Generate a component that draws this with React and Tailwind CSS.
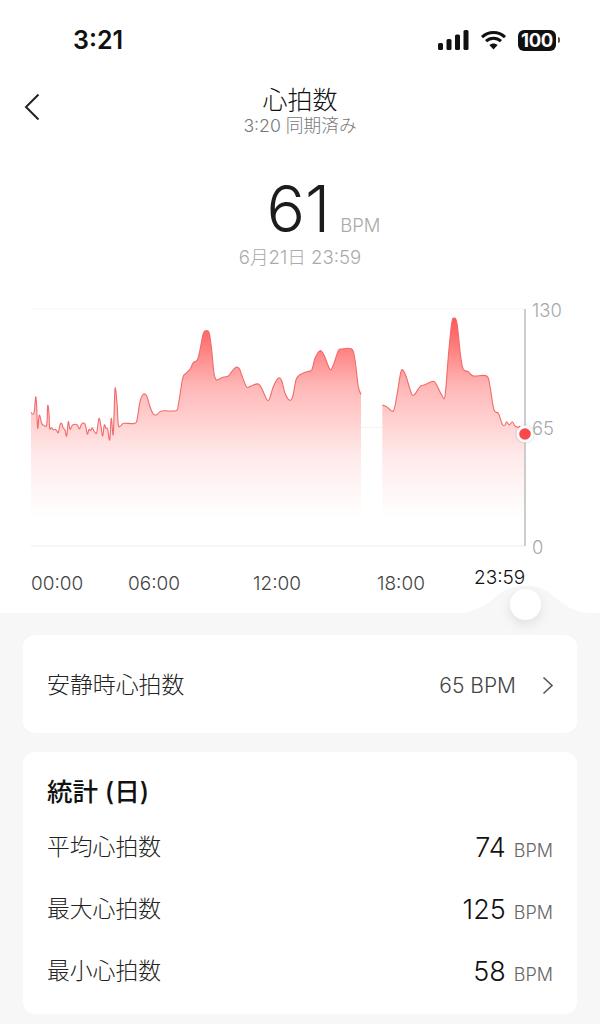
const z1 = [[93,367],[98,373],[103,365],[107,320],[110,350],[113,415],[118,375],[125,400],[130,405],[140,405],[143,347],[147,370],[149,415],[155,413],[160,420],[165,418],[170,422],[175,428],[180,405],[185,400],[190,415],[195,420],[200,438],[205,395],[210,418],[218,405],[232,405],[238,417],[245,402],[255,402],[262,432],[267,418],[272,422],[277,413],[283,425],[290,428],[297,385],[303,410],[308,438],[313,405],[318,415],[323,418],[329,450],[334,385],[340,433],[345,297],[351,340],[355,405],[362,407],[372,400],[405,400],[412,385],[420,335],[430,313],[440,318],[450,350],[460,372],[470,374],[485,363],[528,362],[535,345],[548,265],[558,250],[570,238],[580,218],[592,210],[600,180],[610,130],[620,122],[628,130],[635,180],[642,250],[650,270],[665,263],[685,258],[695,245],[708,232],[718,236],[725,255],[738,288],[745,292],[760,285],[775,282],[785,295],[800,328],[808,328],[820,290],[835,265],[845,272],[855,310],[868,330],[878,320],[888,270],[900,254]];
const z2a = [[20,245],[35,240],[45,205],[60,182],[72,195],[90,238],[100,225],[115,182],[125,177],[155,177],[165,210],[175,290],[183,313]];
const z2b = [[247,345],[260,350],[280,363],[290,320],[302,248],[310,241],[320,265],[335,312],[345,312],[360,290],[375,284],[400,274],[410,285],[425,315],[435,318],[445,200],[455,100],[463,84],[471,100],[482,200],[490,238],[505,245],[520,258],[560,258],[570,290],[582,360],[595,370],[607,403],[615,405],[620,395],[628,405],[637,395],[645,408],[655,412],[660,408]];
const toA = (p, ox) => p.map(([x, y]) => [ox + x / 3, 290 + y / 3]);
const seg1 = [...toA(z1, 0), ...toA(z2a, 300)];
const seg2 = toA(z2b, 300);
const smooth = (pts) => {
  let d = `M${pts[0][0].toFixed(1)} ${pts[0][1].toFixed(1)}`;
  for (let i = 0; i < pts.length - 1; i++) {
    const a = pts[Math.max(i - 1, 0)], b = pts[i], c = pts[i + 1], e = pts[Math.min(i + 2, pts.length - 1)];
    const t = 6;
    d += `C${(b[0] + (c[0] - a[0]) / t).toFixed(1)} ${(b[1] + (c[1] - a[1]) / t).toFixed(1)} ${(c[0] - (e[0] - b[0]) / t).toFixed(1)} ${(c[1] - (e[1] - b[1]) / t).toFixed(1)} ${c[0].toFixed(1)} ${c[1].toFixed(1)}`;
  }
  return d;
};
const area = (pts) => `${smooth(pts)}L${pts[pts.length - 1][0].toFixed(1)} 516L${pts[0][0].toFixed(1)} 516Z`;

const Chart = () => (
  <svg width="528" height="261" viewBox="0 297 528 261" className="block shrink-0 overflow-visible">
    <defs>
      <linearGradient id="hr" gradientUnits="userSpaceOnUse" x1="0" y1="318" x2="0" y2="516">
        <stop offset="0" stopColor="#ff5656" />
        <stop offset="0.35" stopColor="#ffb8b8" />
        <stop offset="0.7" stopColor="#ffeaea" />
        <stop offset="0.88" stopColor="#fff7f7" />
        <stop offset="1" stopColor="#fffefe" />
      </linearGradient>
    </defs>
    <path d="M31 309H525" stroke="#f6f6f6" strokeWidth="1" fill="none" />
    <path d="M31 427.5H525" stroke="#f4f4f4" strokeWidth="1" fill="none" />
    <path d="M31 546H525" stroke="#ececec" strokeWidth="1.2" fill="none" />
    <path d={area(seg1)} fill="url(#hr)" />
    <path d={area(seg2.concat([[524.5, 428]]))} fill="url(#hr)" />
    <path d={smooth(seg1)} stroke="#f26a6a" strokeWidth="1.1" fill="none" />
    <path d={smooth(seg2)} stroke="#f26a6a" strokeWidth="1.1" fill="none" />
    <path d="M525 309V546" stroke="#bdbdbd" strokeWidth="1.5" fill="none" />
    <circle cx="525" cy="434" r="10" fill="#000" opacity="0.06" />
    <circle cx="525" cy="434" r="8.5" fill="#fff" />
    <circle cx="525" cy="434" r="5.8" fill="#f9474a" />
  </svg>
);

const Row = ({ label, value }) => (
  <div className="flex h-[62px] items-center justify-between">
    <span className="text-[22.8px] font-light leading-none text-[#222222]">{label}</span>
    <span className="flex items-baseline">
      <span className="text-[27px] font-light leading-none text-[#111111]">{value}</span>
      <span className="ml-[8px] text-[18px] font-light leading-none text-[#666666]">BPM</span>
    </span>
  </div>
);

export default function App() {
  return (
    <div className="relative flex h-[1024px] w-[600px] flex-col overflow-hidden bg-white" style={{ fontFamily: 'Inter, "Noto Sans CJK JP", sans-serif' }}>
      <div className="flex h-[80px] shrink-0 items-center justify-between pl-[73px] pr-[40px]">
        <span className="text-[25px] font-semibold leading-none text-[#111111]">3:21</span>
        <div className="flex items-center">
          <svg width="31" height="22" viewBox="0 0 31 22" className="block">
            <rect x="0" y="14" width="5" height="7" rx="1.5" fill="#111" />
            <rect x="8.5" y="10" width="5" height="11" rx="1.5" fill="#111" />
            <rect x="17" y="5.5" width="5" height="15.5" rx="1.5" fill="#111" />
            <rect x="25.5" y="1" width="5" height="20" rx="1.5" fill="#111" />
          </svg>
          <svg width="27" height="20" viewBox="0 0 26 20" className="ml-[11px] block">
            <path d="M1.5 7.2C8 1 18 1 24.5 7.2M5.5 11.2C9.8 7.2 16.2 7.2 20.5 11.2" stroke="#111" strokeWidth="3" fill="none" />
            <path d="M13 19.5L8.8 15C11.2 12.9 14.8 12.9 17.2 15Z" fill="#111" />
          </svg>
          <div className="ml-[11px] flex items-center">
            <div className="flex h-[21px] w-[38px] items-center justify-center rounded-[6px] bg-[#111111] text-[18.5px] font-bold leading-none tracking-[-0.3px] text-white">100</div>
            <div className="ml-[2px] h-[6px] w-[2px] rounded-r-full bg-[#555555]"></div>
          </div>
        </div>
      </div>

      <div className="relative flex h-[62px] shrink-0 flex-col items-center">
        <svg width="18" height="28" viewBox="0 0 18 28" className="absolute left-[23px] top-[13px]">
          <path d="M15.5 1.5L3 14L15.5 26.5" stroke="#222" strokeWidth="2" fill="none" />
        </svg>
        <span className="mt-[6px] text-[25px] font-light leading-[28px] text-[#111111]">心拍数</span>
        <span className="mt-[2px] text-[17.7px] font-light leading-[20px] text-[#777777]">3:20 同期済み</span>
      </div>

      <div className="mt-[33px] flex h-[68px] shrink-0 items-baseline justify-center pl-[47px]">
        <span className="text-[64px] font-light leading-[68px] text-[#1c1c1c]">61</span>
        <span className="ml-[10px] text-[18.5px] font-light leading-none text-[#aaaaaa]">BPM</span>
      </div>
      <div className="mt-[2px] h-[24px] shrink-0 text-center text-[18.6px] font-light leading-[24px] text-[#aaaaaa]">6月21日 23:59</div>

      <div className="mt-[28px] flex h-[261px] shrink-0">
        <Chart />
        <div className="ml-[4px] mt-[1px] flex h-[261px] flex-col justify-between text-[18.4px] font-light leading-[24px] text-[#a8a8a8]">
          <span>130</span>
          <span className="-mt-[2px]">65</span>
          <span>0</span>
        </div>
      </div>

      <div className="flex h-[55px] shrink-0 items-start pl-[31px] pt-[14px] text-[19px] font-light leading-[24px] text-[#444444]">
        <span className="w-[97px]">00:00</span>
        <span className="w-[125px]">06:00</span>
        <span className="w-[124px]">12:00</span>
        <span className="w-[97px]">18:00</span>
        <span className="-mt-[6px] text-[#111111]">23:59</span>
      </div>

      <div className="relative flex-1 bg-[#f7f7f7] px-[23px] pt-[22px]">
        <svg width="160" height="34" viewBox="0 0 160 34" className="absolute left-[445px] top-[-32px]">
          <path d="M0 34C28 33 40 26 54 13C66 2 94 2 106 13C120 26 132 33 160 34Z" fill="#f7f7f7" />
        </svg>
        <div className="absolute left-[510px] top-[-24px] h-[31px] w-[31px] rounded-full bg-white shadow-[0_4px_12px_rgba(0,0,0,0.10)]"></div>

        <div className="flex h-[98px] items-center justify-between rounded-[12px] bg-white pl-[24px] pr-[23px] pt-[2px]">
          <span className="text-[22.9px] font-light leading-none text-[#222222]">安静時心拍数</span>
          <div className="flex items-center">
            <span className="text-[21px] font-light leading-none text-[#444444]">65 BPM</span>
            <svg width="12" height="19" viewBox="0 0 12 19" className="ml-[26px] block">
              <path d="M1.5 1.5L10 9.5L1.5 17.5" stroke="#555" strokeWidth="1.6" fill="none" />
            </svg>
          </div>
        </div>

        <div className="mt-[19px] flex h-[262px] flex-col rounded-[12px] bg-white px-[24px] pt-[23px]">
          <div className="mb-[7px] text-[25.5px] font-medium leading-[34px] text-[#111111]">統計 (日)</div>
          <Row label="平均心拍数" value="74" />
          <Row label="最大心拍数" value="125" />
          <Row label="最小心拍数" value="58" />
        </div>
      </div>
    </div>
  );
}
